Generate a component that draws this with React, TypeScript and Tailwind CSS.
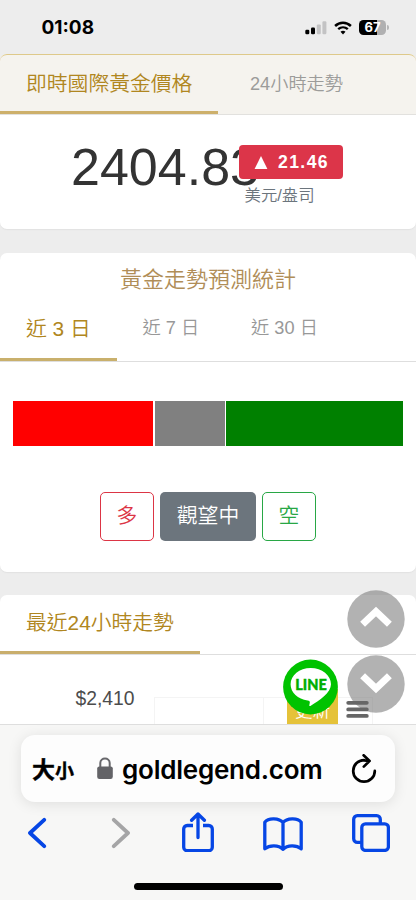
import React from "react";

const sans = "font-['Liberation_Sans','Noto_Sans_CJK_TC',sans-serif]";
const ui = "font-['Inter','Noto_Sans_CJK_TC',sans-serif]";

function StatusBar() {
  return (
    <header className="flex h-[54px] shrink-0 items-start justify-between pl-[41.5px] pr-[27px] pt-[17px]">
      <div className={`${ui} text-[19px] font-bold leading-[22px] tracking-normal text-black`}>01:08</div>
      <div className="flex h-[21px] items-center">
        <svg width="22" height="14" viewBox="0 0 22 14">
          <rect x="0.3" y="8.8" width="4" height="4.4" rx="1.2" fill="#000" />
          <rect x="6" y="6.5" width="4" height="6.7" rx="1.2" fill="#000" />
          <rect x="11.8" y="3.4" width="4" height="9.8" rx="1.2" fill="#c3c3c4" />
          <rect x="17.4" y="0.3" width="4" height="12.9" rx="1.2" fill="#c3c3c4" />
        </svg>
        <svg className="ml-[7px]" width="18" height="14" viewBox="0 0 18 14" fill="none" stroke="#000">
          <path d="M1.1 5C5.6.7 12.4.7 16.9 5" strokeWidth="2.5" />
          <path d="M4.2 8.2c2.8-2.5 6.8-2.5 9.6 0" strokeWidth="2.4" />
          <path d="M9 13.4l-2.5-2.6c1.4-1.3 3.6-1.3 5 0z" fill="#000" stroke="none" />
        </svg>
        <div className="ml-[7px] flex items-center">
          <div className={`${ui} flex h-[15px] w-[27px] items-center justify-center rounded-[4.5px] bg-linear-to-r from-black from-67% to-[#b0b0b1] to-67% text-[13px] font-bold leading-none text-white`}>
            67
          </div>
          <div className="ml-px h-[5px] w-[2px] rounded-r-full bg-[#b5b5b6]" />
        </div>
      </div>
    </header>
  );
}

function PriceCard() {
  return (
    <section className="h-[175px] shrink-0 rounded-[7px] bg-white shadow-[0_1px_1px_#e2e2e2]">
      <div className="flex h-[61px] rounded-[7px] rounded-b-none border-t border-[#dec98a] bg-[#f5f3ee] shadow-[inset_0_-1px_#e2e1de]">
        <div className="h-[59px] w-[218px] border-b-[3px] border-[#cdb06b] pl-[26px] text-[20.8px] leading-[57px] text-[#b08620]">
          即時國際黃金價格
        </div>
        <div className="pl-[32px] text-[18.2px] leading-[59px] text-[#9c9c9a]">24小時走勢</div>
      </div>
      <div className="relative h-[114px] pl-[71px] text-[52px] leading-[105px] text-[#333]">
        2404.83
        <div className="absolute left-[239px] top-[30px] flex h-[34px] w-[104px] items-center rounded-[4px] bg-[#dc3549] pl-[15px] text-[17.6px] font-bold tracking-[1.4px] text-white">
          <svg className="mr-[10px]" width="14" height="13" viewBox="0 0 14 13">
            <path d="M7 0l6.4 13H.6z" fill="white" />
          </svg>
          21.46
        </div>
        <div className="absolute left-[244.5px] top-[68px] text-[16.4px] leading-[24px] text-[#6c757d]">美元/盎司</div>
      </div>
    </section>
  );
}

function ForecastCard() {
  return (
    <section className="mt-[24px] h-[319px] shrink-0 rounded-[7px] bg-white shadow-[0_1px_1px_#e2e2e2]">
      <h2 className="h-[50px] text-center text-[22px] font-[350] leading-[53px] text-[#b08d57]">黃金走勢預測統計</h2>
      <div className="flex h-[59px] border-b border-[#dedede] leading-[50px] text-[#989898]">
        <div className="h-[58px] w-[117px] border-b-[3px] border-[#c9b06c] pl-[26px] text-[20.8px] leading-[52px] text-[#b08620]">近 3 日</div>
        <div className="pl-[25.5px] text-[18.2px]">近 7 日</div>
        <div className="pl-[52px] text-[18.2px]">近 30 日</div>
      </div>
      <div className="mx-[13px] mt-[39px] flex h-[45px] gap-[1.5px]">
        <div className="w-[140.3px] bg-[#ff0000]" />
        <div className="w-[70px] bg-[#808080]" />
        <div className="flex-1 bg-[#008000]" />
      </div>
      <div className="mt-[46px] flex justify-center gap-[6px] text-[20.8px] leading-[46px]">
        <div className="h-[49px] w-[54px] rounded-[5px] border-[1.5px] border-[#dc3545] text-center text-[#dc3545]">多</div>
        <div className="h-[49px] w-[96px] rounded-[5px] bg-[#6c757d] text-center leading-[48px] text-white">觀望中</div>
        <div className="h-[49px] w-[54px] rounded-[5px] border-[1.5px] border-[#28a745] text-center text-[#28a745]">空</div>
      </div>
    </section>
  );
}

function ChartCard() {
  return (
    <section className="relative mt-[23px] h-[129px] shrink-0 rounded-t-[7px] bg-white">
      <div className="h-[60px] border-b border-[#dedede]">
        <div className="h-[59px] w-[200px] border-b-[3px] border-[#c9ae6c] pl-[26px] text-[20.8px] leading-[55px] text-[#b08620]">最近24小時走勢</div>
      </div>
      <div className="flex h-[69px]">
        <div className="w-[154px] pl-[75.5px] text-[19.3px] leading-[87px] text-[#4c4c4c]">$2,410</div>
        <div className="mt-[42px] h-[27px] w-[109px] border-l border-t border-[#f4f4f4]" />
        <div className="mt-[42px] h-[27px] w-[110px] border-x border-t border-[#f4f4f4]" />
      </div>

      <div className="absolute left-[287px] top-[94px] h-[35px] w-[51px] overflow-hidden bg-[#e5c239] text-center text-[17.5px] leading-[45px] text-white">更新</div>
      <svg className="absolute left-[283px] top-[64px]" width="55" height="56" viewBox="0 0 55 56">
        <circle cx="27.5" cy="28" r="27.4" fill="#00c300" />
        <path d="M27.7 9C16.4 9 7.6 16.2 7.6 25.3c0 8.5 7.3 15 17 16.2 1.7.3 2.5.8 2.2 2.3l-.5 2.4c-.1.8.4 1 1.1.7C36.3 42 48 33.5 48 25.3 48 16.2 39 9 27.7 9z" fill="white" />
      </svg>
      <div className="absolute left-[283px] top-[82px] w-[56px] text-center font-['Lato','Inter',sans-serif] text-[14.5px] font-black leading-[16px] text-[#00ae00] [-webkit-text-stroke:0.4px_#00ae00]">LINE</div>
      <svg className="absolute left-[347px] top-[-5px]" width="58" height="58" viewBox="0 0 58 58">
        <circle cx="29" cy="29" r="28.7" fill="#777" fillOpacity=".57" />
        <path d="M15.6 34.3L29 21.5l13.4 12.8" fill="none" stroke="white" strokeWidth="7" />
      </svg>
      <svg className="absolute left-[347px] top-[60px]" width="58" height="58" viewBox="0 0 58 58">
        <circle cx="29" cy="29" r="28.7" fill="#777" fillOpacity=".57" />
        <path d="M15.6 20.7L29 33.5l13.4-12.8" fill="none" stroke="white" strokeWidth="7" />
      </svg>
      <svg className="absolute left-[346px] top-[105px]" width="24" height="19" viewBox="0 0 24 19" stroke="#666" strokeWidth="3.8" strokeLinecap="round">
        <path d="M2.2 2.8h18.6M2.2 9.4h18.6M2.2 15.9h18.6" />
      </svg>
    </section>
  );
}

function BrowserChrome() {
  return (
    <footer className="flex h-[176px] shrink-0 flex-col border-t border-[#dedede] bg-[#f7f7f6]">
      <div className="mx-[21px] mt-[10px] flex h-[67px] items-center rounded-[14px] bg-[#fdfdfd] shadow-[0_2px_14px_rgba(0,0,0,0.1)]">
        <div className={`${ui} ml-[11px] mt-[2px] flex h-[34px] w-[42px] items-baseline whitespace-nowrap font-bold leading-[34px] text-black [-webkit-text-stroke:0.4px_black]`}>
          <span className="text-[23px]">大</span>
          <span className="text-[19px]">小</span>
        </div>
        <svg className="ml-[23px] shrink-0" width="16" height="23" viewBox="0 0 16 23">
          <path d="M3.3 11V6.1c0-6 9.4-6 9.4 0V11" fill="none" stroke="#68686c" strokeWidth="2" />
          <rect x="0.2" y="9.4" width="15.6" height="12.6" rx="2.2" fill="#636367" />
        </svg>
        <div className={`${ui} mt-[2px] w-[219px] shrink-0 whitespace-nowrap pl-[9px] text-[26px] font-semibold tracking-[-0.23px] text-black`}>goldlegend.com</div>
        <svg className="ml-[19px] shrink-0" width="26" height="30" viewBox="0 0 26 30" fill="none" stroke="#000" strokeWidth="2.7" strokeLinecap="round" strokeLinejoin="round">
          <path d="M13 6.1a10.8 10.8 0 1 0 10.8 10.8M12.6 1.3l6 5.6-5.8 5.7M13 6.3l5 .5" />
        </svg>
      </div>
      <nav className="flex h-[62px] items-center pl-[28px] text-[#0646e5]">
        <svg width="19" height="32" viewBox="0 0 19 32" fill="none" stroke="currentColor" strokeWidth="3.8" strokeLinecap="round" strokeLinejoin="round">
          <path d="M16.2 2.8L2 16l14.2 13.2" />
        </svg>
        <svg className="ml-[64px] text-[#a5a5a6]" width="19" height="32" viewBox="0 0 19 32" fill="none" stroke="currentColor" strokeWidth="3.8" strokeLinecap="round" strokeLinejoin="round">
          <path d="M2.8 2.8L17 16 2.8 29.2" />
        </svg>
        <svg className="-mt-[3px] ml-[52px]" width="32" height="40" viewBox="0 0 32 40" fill="none" stroke="currentColor" strokeWidth="3.3" strokeLinecap="round" strokeLinejoin="round">
          <path d="M11 13.5H5.2a3.5 3.5 0 0 0-3.5 3.5v18.2a3.5 3.5 0 0 0 3.5 3.5h21.6a3.5 3.5 0 0 0 3.5-3.5V17a3.5 3.5 0 0 0-3.5-3.5H21" strokeLinecap="butt" />
          <path d="M16 25.5V2.2M9.6 8.3L16 2l6.4 6.3" />
        </svg>
        <svg className="ml-[49px] mt-[2px]" width="40" height="34" viewBox="0 0 40 34" fill="none" stroke="currentColor" strokeWidth="3.3" strokeLinecap="round" strokeLinejoin="round">
          <path d="M20 32.3V5.7C16.2 1 5.5.5 1.8 5.2v26.6c4.5-4 13.8-4.2 18.2.5 4.4-4.7 13.7-4.5 18.2-.5V5.2C34.5.5 23.8 1 20 5.7z" />
        </svg>
        <svg className="ml-[49px]" width="38" height="38" viewBox="0 0 38 38" fill="none" stroke="currentColor" strokeWidth="3.3">
          <path d="M9.8 28.3H5.3a3.6 3.6 0 0 1-3.6-3.6V5.3a3.6 3.6 0 0 1 3.6-3.6h19.4a3.6 3.6 0 0 1 3.6 3.6v4.5" />
          <rect x="9.8" y="9.8" width="26.6" height="26.6" rx="3.6" />
        </svg>
      </nav>
      <div className="mx-auto mt-[19px] h-[7px] w-[149px] rounded-full bg-black" />
    </footer>
  );
}

export default function App() {
  return (
    <main className={`${sans} flex h-[900px] w-[416px] flex-col overflow-hidden bg-[#ededed] font-[350]`}>
      <StatusBar />
      <PriceCard />
      <ForecastCard />
      <ChartCard />
      <BrowserChrome />
    </main>
  );
}
